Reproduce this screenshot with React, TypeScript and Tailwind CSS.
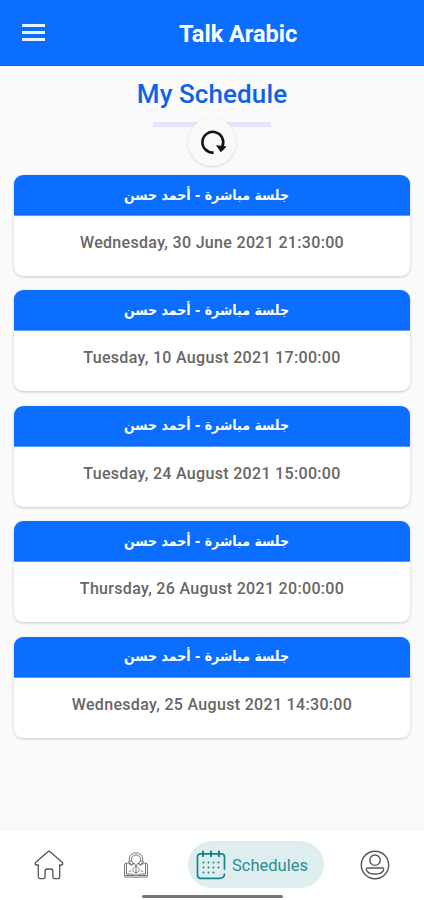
const sessions = [
  "Wednesday, 30 June 2021 21:30:00",
  "Tuesday, 10 August 2021 17:00:00",
  "Tuesday, 24 August 2021 15:00:00",
  "Thursday, 26 August 2021 20:00:00",
  "Wednesday, 25 August 2021 14:30:00",
];

const Header = () => (
  <header className="flex h-[66px] shrink-0 items-center border-b border-[#0860e0] bg-[#0b6eff] text-white">
    <button aria-label="Menu" className="ml-[22px] flex w-[23px] flex-col gap-[4px]">
      <span className="h-[3px] w-full bg-[#eaf2ff]" />
      <span className="h-[3px] w-full bg-[#eaf2ff]" />
      <span className="h-[3px] w-full bg-[#eaf2ff]" />
    </button>
    <h1 className="ml-[134px] pt-[3px] text-[23.5px] leading-7 font-bold whitespace-nowrap">
      Talk Arabic
    </h1>
  </header>
);

const RefreshIcon = () => (
  <svg viewBox="0 0 28 28" className="h-7 w-7" fill="none">
    <path
      d="M15.6 24.6A10.4 10.4 0 1 1 24.3 18.5"
      stroke="#111"
      strokeWidth="2.6"
    />
    <path d="M18 17.3 28.8 18.4 22.8 24.2Z" fill="#111" />
  </svg>
);

const SessionCard = ({ date }: { date: string }) => (
  <div className="h-[101px] overflow-hidden rounded-[9px] bg-white shadow-[0_1px_3px_rgba(0,0,0,0.2)]">
    <div
      dir="rtl"
      className="flex h-[41px] items-center justify-center border-b border-[#5b9dff] bg-[#0b6eff] pr-[11px] font-['DejaVu_Sans_Condensed','DejaVu_Sans',sans-serif] text-[14px] font-bold text-white"
    >
      جلسة مباشرة - أحمد حسن
    </div>
    <p className="pt-[15px] text-center text-[16px] leading-6 font-medium tracking-[0.32px] whitespace-nowrap text-[#666]">
      {date}
    </p>
  </div>
);

const HomeIcon = () => (
  <svg viewBox="0 0 30 30" className="h-[30px] w-[30px]" fill="none" stroke="#555" strokeWidth="1.3" strokeLinejoin="round">
    <path d="M13.8 1.7Q15 .8 16.2 1.7L28.4 12.6Q29.4 14 28 15H25.7V26.7Q25.7 28.6 23.8 28.6H20.5Q18.9 28.6 18.9 27V21.5Q18.9 19 16.5 19H13.5Q11.1 19 11.1 21.5V27Q11.1 28.6 9.5 28.6H6.2Q4.3 28.6 4.3 26.7V15H2Q.6 14 1.6 12.6Z" />
  </svg>
);

const LessonsIcon = () => (
  <svg viewBox="0 0 26 28" className="h-7 w-[26px]" fill="none" stroke="#777" strokeWidth="1">
    <path d="M6.2 11V8.5a6.8 6.8 0 0 1 13.6 0V11M8.4 10V8.5a4.6 4.6 0 0 1 9.2 0V10" />
    <path d="M1.5 24.5V13.2l2-1.2V23q5.5-.6 9.5 1.7Q17 22.4 22.5 23V12l2 1.2v11.3Z" />
    <path d="M1.2 26H11q2 1.2 4 0h9.8M4 12h3l2 2.3 2-2.3 2 3 2-3 2 2.3 2-2.3h3M13 15.5v9" />
    <circle cx="8" cy="12" r="2" />
    <circle cx="18" cy="12" r="2" />
    <path d="M10 17.5 13 15l3 2.5v3L13 22l-3-1.5ZM5.5 21l3-1.5M20.5 21l-3-1.5" strokeWidth=".8" />
  </svg>
);

const CalendarIcon = () => (
  <svg viewBox="0 0 30 30" className="h-[30px] w-[30px]" fill="none" stroke="#16868b" strokeWidth="1.7" strokeLinecap="round">
    <path d="M28.5 19V7Q28.5 3.8 25.3 3.8H4.7Q1.5 3.8 1.5 7V25Q1.5 28.3 4.7 28.3H23.5Q28.5 28.3 28.5 24" />
    <path d="M7 1.5v4.8M15 1.5v4.8M23 1.5v4.8" strokeWidth="2" />
    <path
      d="M7.5 12.5h.01M12.5 12.5h.01M17.5 12.5h.01M22.5 12.5h.01M7.5 17.5h.01M12.5 17.5h.01M17.5 17.5h.01M22.5 17.5h.01M7.5 22.5h.01M12.5 22.5h.01M17.5 22.5h.01"
      strokeWidth="2"
    />
  </svg>
);

const ProfileIcon = () => (
  <svg viewBox="0 0 30 30" className="h-[30px] w-[30px]" fill="none" stroke="#555" strokeWidth="1.4">
    <circle cx="15" cy="15" r="13.7" />
    <circle cx="15" cy="10.2" r="5.2" />
    <path d="M8 18H22Q24 18 23.6 19.9C22.5 22.8 19 24 15 24S7.5 22.8 6.4 19.9Q6 18 8 18Z" />
  </svg>
);

const BottomNav = () => (
  <nav className="relative flex h-[70px] shrink-0 bg-white pt-[11px] shadow-[0_-1px_3px_rgba(0,0,0,0.04)]">
    <div className="ml-[34px] flex h-[47px] items-center">
      <HomeIcon />
    </div>
    <div className="ml-[59px] flex h-[47px] items-center">
      <LessonsIcon />
    </div>
    <div className="ml-[39px] flex h-[47px] w-[136px] items-center gap-[6px] rounded-full bg-[#deeeef] pl-[8px]">
      <CalendarIcon />
      <span className="pt-[3px] text-[16.5px] text-[#2b8e93]">Schedules</span>
    </div>
    <div className="ml-[36px] flex h-[47px] items-center">
      <ProfileIcon />
    </div>
    <span className="absolute bottom-[2px] left-[142px] h-[3px] w-[141px] rounded-full bg-[#777]" />
  </nav>
);

export default function App() {
  return (
    <div className="flex h-[900px] w-[424px] flex-col overflow-hidden bg-[#fafafa] font-[Roboto,sans-serif]">
      <Header />
      <main className="flex flex-1 flex-col">
        <h2 className="mt-[12px] text-center text-[26px] leading-8 font-medium tracking-[0.1px] text-[#0f62e6]">
          My Schedule
        </h2>
        <div className="relative mx-auto mt-[12px] h-[5px] w-[118px] bg-[#e4e4fa]">
          <button
            aria-label="Refresh"
            className="absolute -top-[4px] left-[35px] flex h-12 w-12 items-center justify-center rounded-full bg-[#fafafa] shadow-[0_1px_3px_rgba(0,0,0,0.15)]"
          >
            <RefreshIcon />
          </button>
        </div>
        <div className="mt-[48px] flex flex-col gap-[14.4px] px-[14px]">
          {sessions.map((date) => (
            <SessionCard key={date} date={date} />
          ))}
        </div>
      </main>
      <BottomNav />
    </div>
  );
}
